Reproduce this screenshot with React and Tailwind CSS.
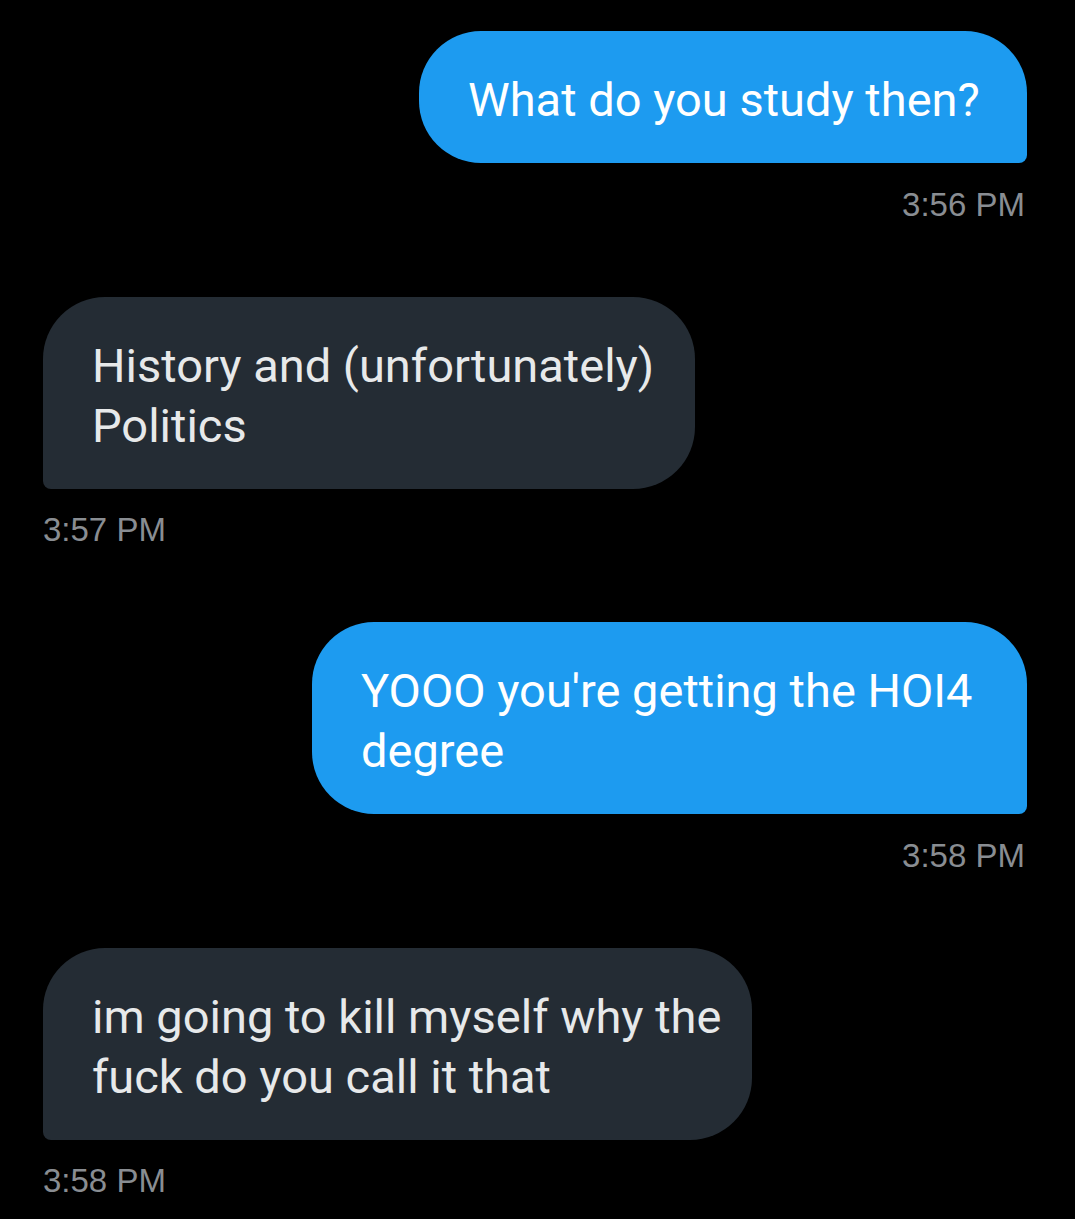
import React from "react";

function Out({ w, lines, time, last }) {
  return (
    <div className={`flex flex-col items-end ${last ? "" : "mb-[72px]"}`}>
      <div
        className={`bg-[#1d9bf0] text-white rounded-[62px] rounded-br-[8px] pl-[49px] pt-[39px] pb-[33px] text-[47px] leading-[60px] whitespace-nowrap font-[Roboto] ${w}`}
      >
        {lines.map((l, i) => (
          <div key={i}>{l}</div>
        ))}
      </div>
      <div className="mt-[22px] text-[33px] leading-[40px] text-[#898d92] font-['Liberation_Sans'] pr-[2px]">
        {time}
      </div>
    </div>
  );
}

function In({ w, lines, time, last }) {
  return (
    <div className={`flex flex-col items-start ${last ? "" : "mb-[72px]"}`}>
      <div
        className={`bg-[#242c34] text-[#e7e9ea] rounded-[62px] rounded-bl-[8px] pl-[49px] pt-[39px] pb-[33px] text-[47px] leading-[60px] whitespace-nowrap font-[Roboto] ${w}`}
      >
        {lines.map((l, i) => (
          <div key={i}>{l}</div>
        ))}
      </div>
      <div className="mt-[21px] text-[33px] leading-[40px] text-[#898d92] font-['Liberation_Sans']">
        {time}
      </div>
    </div>
  );
}

export default function App() {
  return (
    <div className="bg-black min-h-[1219px] w-full pt-[31px] pl-[43px] pr-[48px] flex flex-col">
      <Out w="w-[608px]" lines={["What do you study then?"]} time="3:56 PM" />
      <In w="w-[652px]" lines={["History and (unfortunately)", "Politics"]} time="3:57 PM" />
      <Out w="w-[715px]" lines={["YOOO you're getting the HOI4", "degree"]} time="3:58 PM" />
      <In w="w-[709px]" lines={["im going to kill myself why the", "fuck do you call it that"]} time="3:58 PM" last />
    </div>
  );
}
